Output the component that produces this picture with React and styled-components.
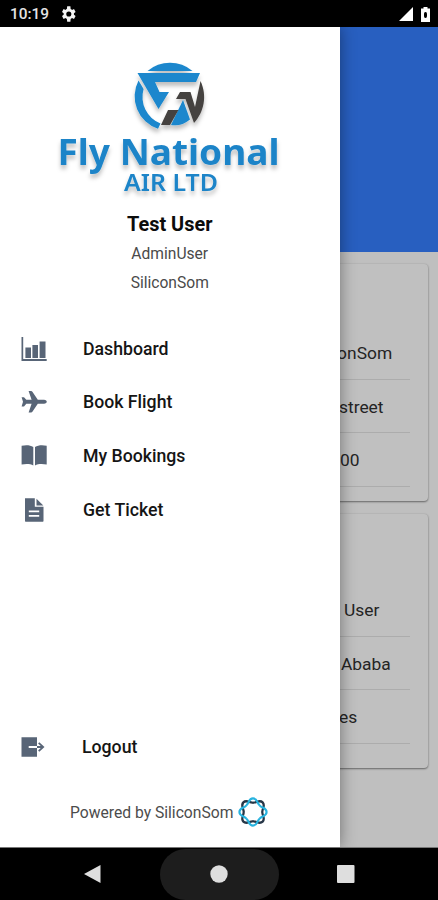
import React from "react";
import styled, { createGlobalStyle } from "styled-components";

const GlobalStyle = createGlobalStyle`
  * { box-sizing: border-box; }
  body { margin: 0; background: #000; font-family: Roboto, "Liberation Sans", sans-serif; }
`;

const Phone = styled.div`
  width: 438px;
  height: 900px;
  display: flex;
  flex-direction: column;
  overflow: hidden;
  background: #000;
`;

const StatusBar = styled.header`
  height: 27px;
  flex: none;
  display: flex;
  align-items: center;
  justify-content: space-between;
  padding: 1px 8px 0 10px;
  color: #e4e4e4;
`;

const StatusGroup = styled.div`
  display: flex;
  align-items: center;
  gap: ${(p) => p.$gap}px;
`;

const Clock = styled.span`
  font-size: 15.4px;
  font-weight: 500;
  line-height: 20px;
`;

const Screen = styled.main`
  position: relative;
  height: 821px;
  flex: none;
  overflow: hidden;
  background: #bfbfbf;
  border-bottom: 1px solid #777;
`;

const Hero = styled.div`
  height: 225px;
  background: #285fc0;
`;

const Cards = styled.div`
  display: flex;
  flex-direction: column;
  gap: 13px;
  padding: 12px 10px 0;
`;

const Card = styled.section`
  height: ${(p) => p.$height}px;
  padding: ${(p) => p.$top}px 18px 0 14px;
  border-radius: 4px;
  background: #c0c0c0;
  box-shadow: 0 1px 2px rgba(0, 0, 0, 0.45), 0 0 2px rgba(0, 0, 0, 0.1);
`;

const Detail = styled.div`
  height: 53.5px;
  display: flex;
  align-items: center;
  padding: 2px 0 0 ${(p) => p.$inset}px;
  border-bottom: 1px solid #acacac;
  color: #242424;
  font-size: 17.4px;
  white-space: nowrap;
`;

const Drawer = styled.aside`
  position: absolute;
  inset: 0 auto 0 0;
  width: 339.5px;
  display: flex;
  flex-direction: column;
  background: #fff;
  box-shadow: 0 0 15px rgba(0, 0, 0, 0.42);
`;

const Brand = styled.div`
  height: 178px;
  flex: none;
  padding-top: 28px;
`;

const Profile = styled.div`
  display: flex;
  flex-direction: column;
  align-items: center;
  height: 117px;
  padding-top: 4px;
`;

const UserName = styled.strong`
  font-size: 19.9px;
  font-weight: 700;
  line-height: 31px;
  color: #0c0c0c;
`;

const UserMeta = styled.span`
  font-size: 15.6px;
  line-height: 28.5px;
  color: #4a4a4a;
`;

const Menu = styled.nav`
  display: flex;
  flex-direction: column;
`;

const MenuItem = styled.a`
  height: 53.6px;
  display: flex;
  align-items: center;
  gap: 35px;
  padding-left: 20px;
  font-size: 17.7px;
  font-weight: 500;
  color: #151515;

  svg { flex: none; fill: #586577; }
`;

const DrawerEnd = styled.div`
  margin-top: auto;
  height: 127px;
`;

const Powered = styled.div`
  height: 77px;
  display: flex;
  align-items: center;
  justify-content: center;
  gap: 4px;
  font-size: 15.7px;
  letter-spacing: -0.02px;
  color: #4c4c4c;
`;

const NavBar = styled.footer`
  flex: 1;
  display: flex;
  align-items: center;
  justify-content: center;
  gap: 58px;

  svg { fill: #dedede; }
`;

const HomePill = styled.div`
  width: 119px;
  height: 51px;
  display: flex;
  align-items: center;
  justify-content: center;
  border-radius: 26px;
  background: #1d1d1d;
`;

const Dashboard = () => (
  <svg width="28" height="28" viewBox="0 0 28 28">
    <path d="M1.5 2h1.7v22h23.5v2H1.5zM5.4 12.5h5.6V23H5.4zM12.4 10H18v13h-5.6zM19.6 6.5h5.9V23h-5.9z" />
  </svg>
);

const Plane = () => (
  <svg width="28" height="28" viewBox="0 0 28 28">
    <path d="M24 11.8c3.7.1 3.7 3.8 0 4h-6.2l-5.4 8c-.3.5-.8.7-1.3.7H8.6l3-8.7H6.3L4 18.4H1.6L3 13.8 1.6 9.2H4l2.3 2.6h5.3l-3-8.7h2.5c.5 0 1 .2 1.3.7l5.4 8z" />
  </svg>
);

const Book = () => (
  <svg width="28" height="28" viewBox="0 0 28 28">
    <path d="M1.6 3.7c4.7-1 8.7-.6 11.7 1.2v18.6c-2.9-1.7-7-1.9-11.7-1zM26.7 3.7c-4.7-1-8.7-.6-11.7 1.2v18.6c2.9-1.7 7-1.9 11.7-1z" />
  </svg>
);

const Ticket = () => (
  <svg width="28" height="28" viewBox="0 0 28 28">
    <path fillRule="evenodd" d="M5 2.2h9.8v8.6h8.7V24.8c0 .8-.3 1-1 1H6c-.7 0-1-.3-1-1zM8.8 14.5v1.7h10.4v-1.7zm0 4.5v1.7h10.4V19z" />
    <path d="M16.5 2.8l6.8 6.8h-6.8z" />
  </svg>
);

const Exit = () => (
  <svg width="27" height="28" viewBox="0 0 27 28">
    <path fillRule="evenodd" d="M1.5 4.3H17v8.6H8.7v2.2H17v8.6H1.5z" />
    <path d="M17 14h6.5M18.7 9.8l4.5 4.2-4.5 4.2" fill="none" stroke="#586577" strokeWidth="1.8" />
  </svg>
);

const Logo = () => (
  <svg width="339" height="145" viewBox="0 55 339 145">
    <defs>
      <filter id="lift" x="-10%" y="-10%" width="120%" height="130%">
        <feDropShadow dx="0" dy="4" stdDeviation="2" floodColor="#000" floodOpacity="0.25" />
      </filter>
    </defs>
    <g filter="url(#lift)">
      <path d="M147.5 71A34.5 34.5 0 0 1 192.5 71Z" fill="#1a87cd" />
      <path d="M138.5 80.5A34.3 34.3 0 0 0 158 128.8L160.5 123.5A28.5 28.5 0 0 1 143.6 89Z" fill="#1a87cd" />
      <path d="M137.5 73H200L196 82H155L159.5 92H169L158.5 109Z" fill="#1a87cd" />
      <path d="M183 100L190 119.5C184 124.5 178 126 171 125Z" fill="#1a87cd" />
      <path d="M168 110H178.5L170 125H161Z" fill="#45423f" />
      <path d="M180 92H190.5L195 107L200.5 81C207.5 96 204 112 194 123L185.5 99H176Z" fill="#45423f" />
      <text x="57.5" y="165" textLength="222" lengthAdjust="spacingAndGlyphs" fontFamily="'Noto Sans', sans-serif" fontSize="36.5" fontWeight="700" fill="#1d84c8">Fly National</text>
      <text x="124" y="190.5" textLength="94" lengthAdjust="spacingAndGlyphs" fontFamily="'Noto Sans', sans-serif" fontSize="22.5" fontWeight="600" fill="#1d84c8">AIR LTD</text>
    </g>
  </svg>
);

const angles = [0, 90, 180, 270];
const lobe = "M-6.8-6.6C-4-8.2-4.6-13.6 0-13.6S4-8.2 6.8-6.6";

const Rosette = () => (
  <svg width="32" height="32" viewBox="-16 -16 32 32" fill="none">
    {angles.map((a) => (
      <path key={a} transform={`rotate(${a + 45})`} d={lobe} stroke="#263647" strokeWidth="2.3" />
    ))}
    {angles.map((a) => (
      <path key={a} transform={`rotate(${a})`} d={lobe} stroke="#27b3df" strokeWidth="2.1" />
    ))}
  </svg>
);

const links = [
  ["Dashboard", Dashboard],
  ["Book Flight", Plane],
  ["My Bookings", Book],
  ["Get Ticket", Ticket],
];

export default function App() {
  return (
    <>
      <GlobalStyle />
      <Phone>
        <StatusBar>
          <StatusGroup $gap={11}>
            <Clock>10:19</Clock>
            <svg width="16" height="16" viewBox="2 2 20 20" fill="#f4f4f4">
              <path fillRule="evenodd" d="M19.4 13c.1-.7.1-1.3 0-2l2.1-1.6-2-3.5-2.5 1a7 7 0 0 0-1.7-1L15 2.3h-4l-.4 3.6a7 7 0 0 0-1.7 1l-2.4-1-2 3.5L6.6 11c-.1.7-.1 1.3 0 2l-2.1 1.6 2 3.5 2.4-1a7 7 0 0 0 1.7 1l.4 3.6h4l.3-3.6a7 7 0 0 0 1.7-1l2.5 1 2-3.5zM13 15.2a3.2 3.2 0 1 1 0-6.4 3.2 3.2 0 0 1 0 6.4z" />
            </svg>
          </StatusGroup>
          <StatusGroup $gap={8}>
            <svg width="14" height="14" viewBox="0 0 14 14"><path d="M14 0v14H0z" fill="#fff" /></svg>
            <svg width="9" height="15" viewBox="0 0 9 15">
              <path fillRule="evenodd" d="M2.5 0h4v1.5H9V15H0V1.5h2.5zM4.5 5C3 5 3 6.5 3 8s0 3 1.5 3S6 9.5 6 8 6 5 4.5 5z" fill="#fff" />
            </svg>
          </StatusGroup>
        </StatusBar>
        <Screen>
          <Hero />
          <Cards>
            <Card $height={237} $top={62}>
              <Detail $inset={281}>SiliconSom</Detail>
              <Detail $inset={315}>street</Detail>
              <Detail $inset={316}>00</Detail>
            </Card>
            <Card $height={254} $top={69}>
              <Detail $inset={320}>User</Detail>
              <Detail $inset={317}>Ababa</Detail>
              <Detail $inset={315}>es</Detail>
            </Card>
          </Cards>
          <Drawer>
            <Brand><Logo /></Brand>
            <Profile>
              <UserName>Test User</UserName>
              <UserMeta>AdminUser</UserMeta>
              <UserMeta>SiliconSom</UserMeta>
            </Profile>
            <Menu>
              {links.map(([label, Icon]) => (
                <MenuItem key={label}><Icon />{label}</MenuItem>
              ))}
            </Menu>
            <DrawerEnd>
              <MenuItem><Exit />Logout</MenuItem>
              <Powered>Powered by SiliconSom <Rosette /></Powered>
            </DrawerEnd>
          </Drawer>
        </Screen>
        <NavBar>
          <svg width="18" height="20" viewBox="0 0 18 20"><path d="M16.5 1v18L0 10z" /></svg>
          <HomePill>
            <svg width="18" height="18" viewBox="0 0 18 18"><circle cx="9" cy="9" r="8.7" /></svg>
          </HomePill>
          <svg width="18" height="18" viewBox="0 0 18 18"><rect width="17.5" height="18" rx="1" /></svg>
        </NavBar>
      </Phone>
    </>
  );
}
